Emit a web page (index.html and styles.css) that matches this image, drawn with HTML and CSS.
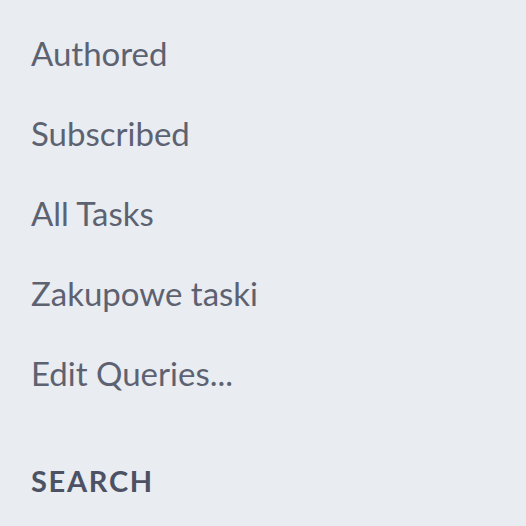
FILE: index.html
```html
<!DOCTYPE html>
<html lang="en">
<head>
    <meta charset="UTF-8">
    <title>Queries</title>
    <link rel="stylesheet" href="styles.css">
</head>
<body>
    <nav class="sidebar">
        <ul class="query-list">
            <li><a href="#">Authored</a></li>
            <li><a href="#">Subscribed</a></li>
            <li><a href="#">All Tasks</a></li>
            <li><a href="#">Zakupowe taski</a></li>
            <li><a href="#">Edit Queries...</a></li>
        </ul>
        <h3 class="section-title">SEARCH</h3>
    </nav>
</body>
</html>
```

FILE: styles.css
```css
* {
    margin: 0;
    padding: 0;
    box-sizing: border-box;
}

body {
    background-color: #e9ecf1;
    font-family: Lato, 'Noto Sans', sans-serif;
    height: 526px;
    overflow: hidden;
}

.sidebar {
    padding: 13px 0 0 31px;
}

.query-list {
    list-style: none;
}

.query-list li {
    height: 80px;
    line-height: 80px;
}

.query-list a {
    color: #5d6271;
    text-decoration: none;
    font-size: 33px;
}

.section-title {
    margin-top: 50px;
    font-size: 29px;
    font-weight: 700;
    color: #4c5263;
    letter-spacing: 1.7px;
}
```
